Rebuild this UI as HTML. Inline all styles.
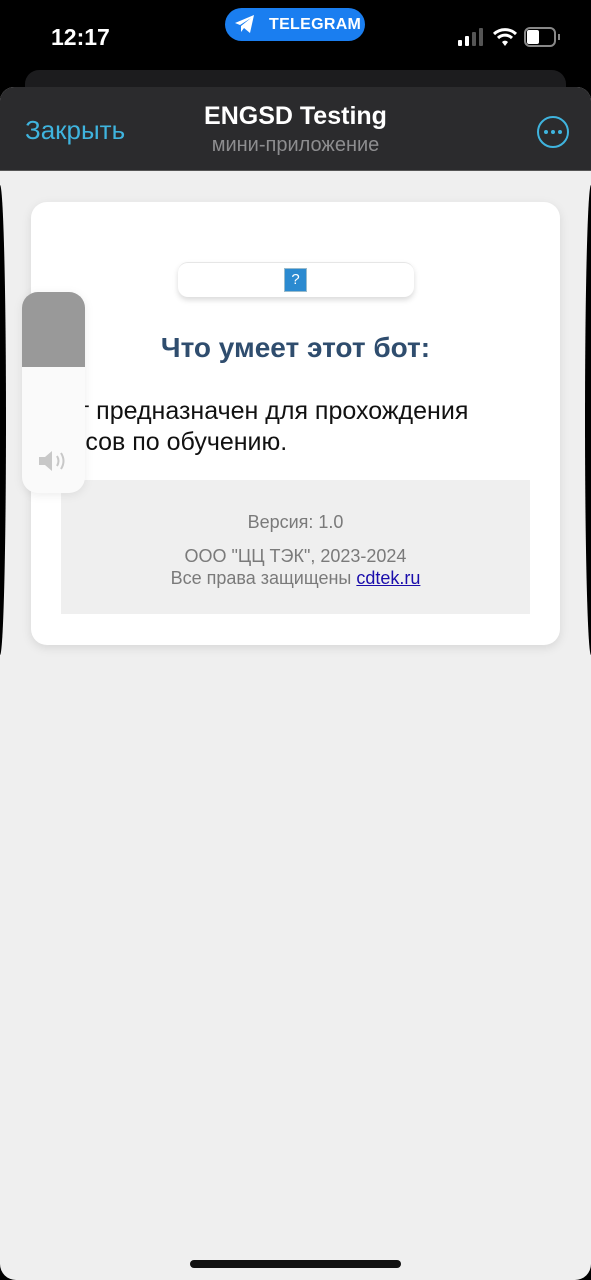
<!DOCTYPE html>
<html><head><meta charset="utf-8"><style>
*{margin:0;padding:0;box-sizing:border-box}
body{width:591px;height:1280px;background:#000;position:relative;overflow:hidden;font-family:"Liberation Sans",sans-serif}
.abs{position:absolute}
</style></head><body>
<div class="abs" style="left:0;top:0;width:591px;height:1280px;background:#000"></div>
<div class="abs" style="left:51px;top:24px;color:#fff;font-size:23px;font-weight:bold">12:17</div>
<div class="abs" style="left:225px;top:8px;width:140px;height:33px;border-radius:17px;background:#1a7ef0;color:#fff;font-size:16px;font-weight:bold;line-height:33px;padding-left:44px;letter-spacing:0.3px">TELEGRAM</div>
<svg class="abs" style="left:234px;top:14px" width="22" height="20" viewBox="0 0 22 20"><path d="M1 9 L20 1 L16 19 L10 14 L7 18 L7 12 L17 4 L6 11 Z" fill="#fff"/></svg>
<div class="abs" style="left:458px;top:40px;width:4px;height:6px;background:#fff;border-radius:1px"></div>
<div class="abs" style="left:465px;top:36px;width:4px;height:10px;background:#fff;border-radius:1px"></div>
<div class="abs" style="left:472px;top:32px;width:4px;height:14px;background:#555;border-radius:1px"></div>
<div class="abs" style="left:479px;top:28px;width:4px;height:18px;background:#555;border-radius:1px"></div>
<svg class="abs" style="left:492px;top:27px" width="26" height="20" viewBox="0 0 26 20"><path d="M2 7 A16 16 0 0 1 24 7" stroke="#fff" stroke-width="3" fill="none"/><path d="M6 11 A10 10 0 0 1 20 11" stroke="#fff" stroke-width="3" fill="none"/><path d="M10 15 L13 19 L16 15 A4 4 0 0 0 10 15Z" fill="#fff"/></svg>
<div class="abs" style="left:524px;top:27px;width:32px;height:20px;border:2px solid #888;border-radius:6px"></div>
<div class="abs" style="left:527px;top:30px;width:12px;height:14px;background:#fff;border-radius:2px"></div>
<div class="abs" style="left:558px;top:34px;width:2px;height:6px;background:#888"></div>
<div class="abs" style="left:25px;top:70px;width:541px;height:40px;background:#1c1c1e;border-radius:14px"></div>
<div class="abs" style="left:0;top:87px;width:591px;height:1193px;background:#efefef;border-radius:14px 14px 16px 16px;overflow:hidden">
 <div class="abs" style="left:0;top:0;width:591px;height:84px;background:#2b2b2d;border-bottom:1px solid #555"></div>
</div>
<div class="abs" style="left:25px;top:115px;color:#3fb4de;font-size:26px">Закрыть</div>
<div class="abs" style="left:0;top:102px;width:591px;text-align:center;color:#fff;font-size:25px;font-weight:bold">ENGSD Testing</div>
<div class="abs" style="left:0;top:134px;width:591px;text-align:center;color:#8d8d8f;font-size:20px">мини-приложение</div>
<div class="abs" style="left:537px;top:116px;width:32px;height:32px;border:2.5px solid #3fb4de;border-radius:50%"></div>
<div class="abs" style="left:544px;top:130px;width:4px;height:4px;background:#3fb4de;border-radius:50%;box-shadow:7px 0 #3fb4de,14px 0 #3fb4de"></div>
<div class="abs" style="left:-6px;top:185px;width:12px;height:470px;background:#000;border-radius:50%"></div>
<div class="abs" style="left:585px;top:185px;width:12px;height:470px;background:#000;border-radius:50%"></div>
<div class="abs" style="left:31px;top:202px;width:529px;height:443px;background:#fff;border-radius:16px;box-shadow:0 3px 10px rgba(0,0,0,0.1)"></div>
<div class="abs" style="left:178px;top:262px;width:236px;height:35px;background:#fff;border-radius:10px;box-shadow:0 3px 6px rgba(0,0,0,0.15);border-top:1px solid #e6e6e6"></div>
<div class="abs" style="left:284px;top:268px;width:23px;height:24px;background:#2b8ad0;border:1px solid #9bc;color:#fff;font-size:15px;text-align:center;line-height:22px">?</div>
<div class="abs" style="left:31px;top:332px;width:529px;text-align:center;color:#2f4d6e;font-size:28px;font-weight:bold">Что умеет этот бот:</div>
<div class="abs" style="left:48px;top:396px;color:#111;font-size:25px;line-height:31px;white-space:nowrap">Бот предназначен для прохождения<br>курсов по обучению.</div>
<div class="abs" style="left:61px;top:480px;width:469px;height:134px;background:#efefef;text-align:center;color:#7a7a7a;font-size:18px">
<div style="margin-top:32px">Версия: 1.0</div>
<div style="margin-top:12px;line-height:22px">ООО "ЦЦ ТЭК", 2023-2024<br>Все права защищены <span style="color:#1a0dab;text-decoration:underline">cdtek.ru</span></div>
</div>
<div class="abs" style="left:22px;top:292px;width:63px;height:201px;background:#fafafa;border-radius:16px;overflow:hidden;box-shadow:0 2px 10px rgba(0,0,0,0.08)"><div style="height:75px;background:#999"></div></div>
<svg class="abs" style="left:37px;top:449px" width="34" height="24" viewBox="0 0 34 24"><path d="M2 8 H8 L15 2 V22 L8 16 H2Z" fill="#c8c8c8"/><path d="M20 7 Q23 12 20 17" stroke="#c8c8c8" stroke-width="2" fill="none"/><path d="M24 4 Q29 12 24 20" stroke="#c8c8c8" stroke-width="2" fill="none"/></svg>
<div class="abs" style="left:190px;top:1260px;width:211px;height:8px;background:#111;border-radius:4px"></div>
</body></html>
